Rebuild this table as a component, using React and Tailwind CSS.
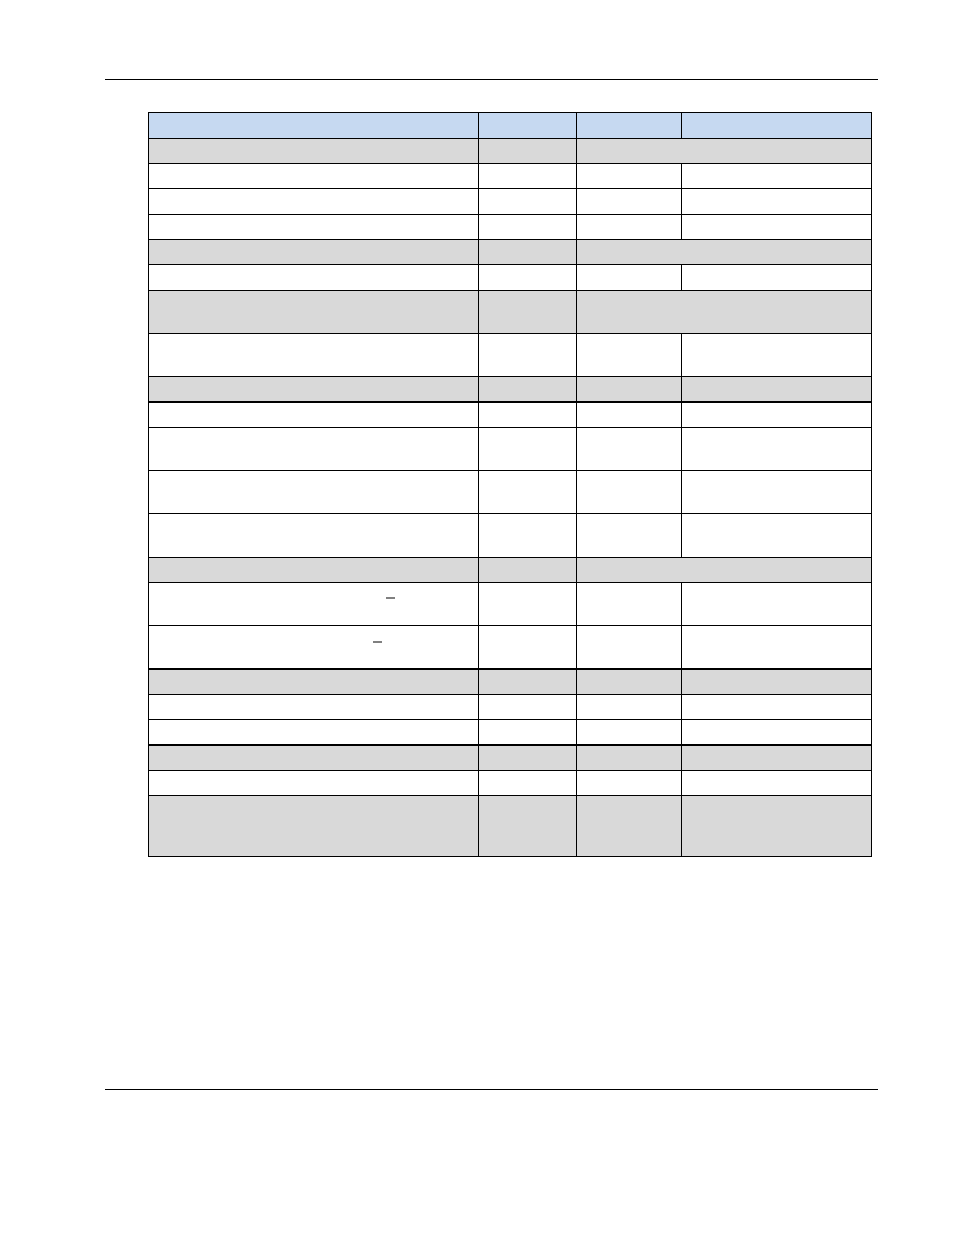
const BLUE = "bg-[#c6d9f1]";
const GRAY = "bg-[#d9d9d9]";

// type: 'h' header, 'g' gray 4 cols, 'gm' gray merged 3-4, 'w' white
const rows = [
  { t: "h", h: 26 },
  { t: "gm", h: 25 },
  { t: "w", h: 25 },
  { t: "w", h: 26 },
  { t: "w", h: 25 },
  { t: "gm", h: 25 },
  { t: "w", h: 26 },
  { t: "gm", h: 43 },
  { t: "w", h: 43 },
  { t: "g", h: 25 },
  { t: "w", h: 26, thick: true },
  { t: "w", h: 43 },
  { t: "w", h: 43 },
  { t: "w", h: 44 },
  { t: "gm", h: 25 },
  { t: "w", h: 43, dash: 1 },
  { t: "w", h: 43, dash: 2 },
  { t: "g", h: 26, thick: true },
  { t: "w", h: 25 },
  { t: "w", h: 25 },
  { t: "g", h: 26, thick: true },
  { t: "w", h: 25 },
  { t: "g", h: 61 },
];

function Row({ r }) {
  const bg = r.t === "h" ? BLUE : r.t === "w" ? "bg-white" : GRAY;
  const border = r.thick ? "border-t-2" : "border-t";
  const merged = r.t === "gm";
  return (
    <div
      className={`grid ${merged ? "grid-cols-[330px_98px_294px]" : "grid-cols-[330px_98px_105px_189px]"} ${border} border-black ${bg}`}
      style={{ height: r.h }}
    >
      <div className="border-r border-black">
        {r.dash === 1 && <div className="ml-[237px] mt-[14px] w-[9px] h-[2px] bg-[#808080]" />}
        {r.dash === 2 && <div className="ml-[224px] mt-[15px] w-[9px] h-[2px] bg-[#808080]" />}
      </div>
      <div className="border-r border-black" />
      {merged ? (
        <div />
      ) : (
        <>
          <div className="border-r border-black" />
          <div />
        </>
      )}
    </div>
  );
}

export default function App() {
  return (
    <div className="w-[954px] min-h-[1235px] bg-white pt-[79px]">
      <div className="ml-[105px] w-[773px] h-px bg-black" />
      <div className="ml-[148px] mt-[32px] w-[724px] border-l border-r border-b border-black">
        {rows.map((r, i) => (
          <Row key={i} r={r} />
        ))}
      </div>
      <div className="ml-[105px] mt-[232px] w-[773px] h-px bg-black" />
    </div>
  );
}
